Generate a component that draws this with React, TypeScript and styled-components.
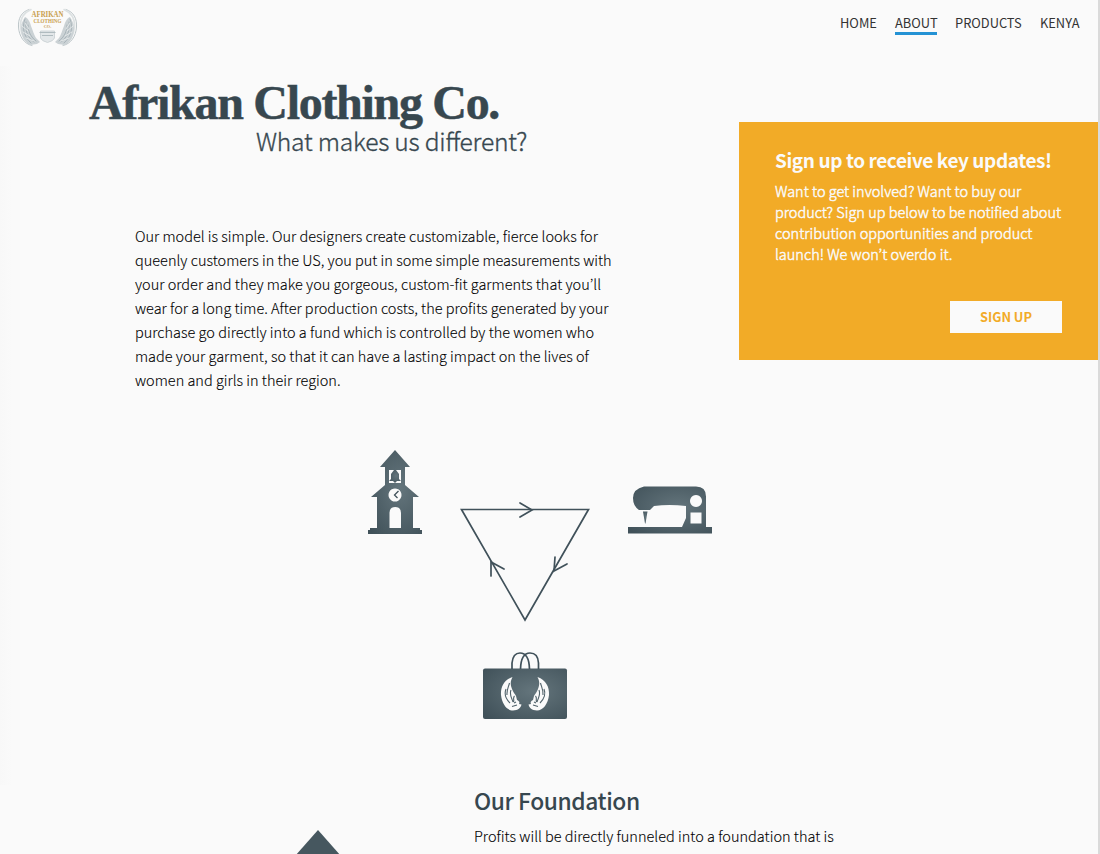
import React from 'react';
import styled, { createGlobalStyle } from 'styled-components';

const GlobalStyle = createGlobalStyle`
  * { box-sizing: border-box; }
  body {
    margin: 0;
    background: #fafafa;
    font-family: 'Noto Sans CJK JP', 'Noto Sans', sans-serif;
    font-feature-settings: 'liga' 1;
    color: #000;
  }
  h1, h2, h3, p { margin: 0; font-weight: 400; }
`;

const slate = '#37474f';
const gold = '#f2ab27';

const Page = styled.div`
  width: 1100px;
  height: 854px;
  overflow: hidden;
  border-right: 2px solid #dadada;
  background: linear-gradient(90deg, #f8f8f8, #fafafa 12px) 0 0 / 100% 785px no-repeat #fafafa;
`;

const Header = styled.header`
  display: flex;
  justify-content: space-between;
  align-items: flex-start;
  height: 66px;
  padding: 7px 18px 0 17px;
  background: #fafafa;
`;

const Nav = styled.nav`
  display: flex;
  gap: 18px;
  padding-top: 6px;
`;

const NavLink = styled.a<{ $active?: boolean; $width: number }>`
  width: ${(p) => p.$width}px;
  height: 22px;
  border-bottom: 3px solid ${(p) => (p.$active ? '#2492d4' : 'transparent')};
  font-size: 12.85px;
  line-height: 20px;
  color: #333;
  white-space: nowrap;
`;

const Intro = styled.section`
  display: flex;
  justify-content: space-between;
  height: 383px;
`;

const IntroText = styled.div`
  padding: 13px 0 0 89px;
`;

const Title = styled.h1`
  font: 700 48px/48px 'Liberation Serif', serif;
  letter-spacing: -1.3px;
  -webkit-text-stroke: 0.5px ${slate};
  color: ${slate};
  white-space: nowrap;
`;

const Subtitle = styled.h2`
  padding-left: 167px;
  font-size: 24.6px;
  font-weight: 300;
  line-height: 30px;
  letter-spacing: -0.22px;
  -webkit-text-stroke: 0.35px ${slate};
  margin-top: -2px;
  color: ${slate};
  white-space: nowrap;
`;

const Copy = styled.p<{ $size: number; $leading: number; $stroke?: number }>`
  font-size: ${(p) => p.$size}px;
  line-height: ${(p) => p.$leading}px;
  font-weight: 300;
  -webkit-text-stroke: ${(p) => p.$stroke ?? 0}px currentColor;
`;

const Line = styled.span`
  display: block;
  white-space: nowrap;
`;

const Model = styled.div`
  padding: 69px 0 0 46px;
`;

const Card = styled.aside`
  display: flex;
  flex-direction: column;
  width: 359px;
  height: 238px;
  margin-top: 56px;
  padding: 24px 36px 27px;
  background: ${gold};
  color: #fafafa;
`;

const CardTitle = styled.h3`
  margin-bottom: 6px;
  font-size: 19px;
  font-weight: 700;
  line-height: 28px;
  letter-spacing: -0.4px;
  white-space: nowrap;
`;

const SignUp = styled.button`
  align-self: flex-end;
  width: 112px;
  height: 32px;
  margin-top: auto;
  padding: 0;
  border: 0;
  background: #fafafa;
  color: ${gold};
  font: 700 12.8px/32px 'Noto Sans CJK JP', sans-serif;
`;

const Cycle = styled.section`
  padding-left: 366px;
  height: 335px;
`;

const Foundation = styled.section`
  display: flex;
`;

const FoundationArt = styled.div`
  width: 474px;
  padding: 46px 0 0 268px;
`;

const FoundationTitle = styled.h2`
  font-size: 22.8px;
  font-weight: 500;
  line-height: 34px;
  letter-spacing: -0.42px;
  margin: 0 0 6px;
  color: ${slate};
`;

function LogoWing() {
  return (
    <g fill="none" strokeLinecap="round">
      <path d="M12 2.500C4 5 1 12 1.500 20 2 29 7 37 15 38.500" stroke="#bdc6c9" strokeWidth="1" />
      <path d="M14 2.500C6 6 3 13 3.500 20 4 28 8 35 15 37" stroke="#dde2e3" strokeWidth="1.600" />
      <path d="M8 10c3 1 5 5 6 9 2 5 3 9 5 12l4 4-3 2-7 1C7 35 4 28 4 21c0-4 2-8 4-11Z" fill="#cbd2d5" />
      <path d="M8 12c-3 8-2 17 6 24M9 15c-1 8 1 15 8 20M11 18c0 7 3 12 8 16" stroke="#a4b0b5" strokeWidth=".9" />
      <path d="m5 19 6 5M6 25l7 4M9 31l8 3M8 16l4 6" stroke="#edf0f0" strokeWidth=".8" />
    </g>
  );
}

function Logo() {
  return (
    <svg width="61" height="40" viewBox="0 0 61 40">
      <LogoWing />
      <g transform="translate(61 0) scale(-1 1)"><LogoWing /></g>
      <path d="M23.500 24h14v7q-1 3-7 4.500-6-1.500-7-4.500Z" fill="#e3e7e9" stroke="#c6ced1" strokeWidth=".8" />
      <path d="M22.500 25.500h16M25 28.500h11" stroke="#b0bbbf" strokeWidth="1.200" />
      <g fill="#c9a04e" textAnchor="middle" fontFamily="Liberation Serif, serif" fontWeight="700">
        <text x="30.5" y="10.300" fontSize="8" textLength="32" lengthAdjust="spacingAndGlyphs">AFRIKAN</text>
        <text x="30.5" y="16.400" fontSize="5.800" textLength="28" lengthAdjust="spacingAndGlyphs">CLOTHING</text>
        <text x="30.5" y="21.200" fontSize="4.300">CO.</text>
      </g>
    </svg>
  );
}

function BagWing() {
  return (
    <g>
      <path d="M42.500 37C34 40 30.500 47 31 55c1 9 6 15.500 12 15.500 5 0 8-3 8.500-6l-2.500-.5c1-2 0-3-2-4l-1-4c-1-2-3-4-4-7-2-5-1.500-8 .5-12Z" fill="#fafafa" />
      <path d="M39.500 43c-1 4-3 7-2.500 12M36 49c-2 5 0 10 4 14M41 50c-2 5 1 8 2 12M44.500 56c-2 2 0 4-1 6M42 66.500l5-1.500M46 62l-2 1" fill="none" stroke="#51626a" strokeWidth="1.100" />
    </g>
  );
}

function CycleDiagram() {
  return (
    <svg width="350" height="280" viewBox="366 449 350 280">
      <defs>
        <radialGradient id="metal" cx=".6" cy=".45" r=".75">
          <stop offset="0" stopColor="#64757c" />
          <stop offset="1" stopColor="#405159" />
        </radialGradient>
      </defs>
      <g fill="url(#metal)">
        <path fillRule="evenodd" d="M395 450l15 17h-5v18l14 12h-6v31h7v2h2v4h-54v-4h2v-2h7v-31h-6l14-12v-18h-5ZM389 470v13h12v-13ZM395 488.500a6.500 6.500 0 1 0 .01 0ZM389.500 528h11.500v-15q0-6-5.800-6t-5.700 6Z" />
        <path d="M394 470h2l3 4v5l2 2h-4l-2 2-2-2h-4l2-2v-5Z" />
        <path fillRule="evenodd" d="M644 486.500h52q10 0 10 10v30.500h6v6.500h-84v-6.500h54l4-9v-12q-17-2-32 0l-4 4h-11q-6-4-6-12 0-9 11-11.500ZM696 495a6 6 0 1 0 .01 0ZM690.500 512.500v11h11v-11Z" />
        <path d="M643 511.500h4.500l-2 12h-.5Z" />
        <rect x="483" y="668.500" width="84" height="50.500" rx="2" />
      </g>
      <g fill="none" stroke="#40515a" strokeWidth="1.700">
        <path d="m398.500 491-4 4 3 3" strokeWidth="1.300" />
        <path d="M461.500 509.500h127L525 620Z" />
        <path d="m520 503 12 7-12 7M555 557l-1 14 13-7M491 576l0-14 13 7" strokeLinecap="round" />
        <path d="M512 669v-6q1-10 8-10 9 0 9.500 16M520.500 669q.5-16 9.500-16 8 0 8.500 10v6" />
      </g>
      <g transform="translate(470 640)"><BagWing /></g>
      <g transform="translate(580 640) scale(-1 1)"><BagWing /></g>
    </svg>
  );
}

export default function App() {
  return (
    <Page>
      <GlobalStyle />
      <Header>
        <Logo />
        <Nav>
          <NavLink $width={37}>HOME</NavLink>
          <NavLink $width={42} $active>ABOUT</NavLink>
          <NavLink $width={67}>PRODUCTS</NavLink>
          <NavLink $width={40}>KENYA</NavLink>
        </Nav>
      </Header>
      <Intro>
        <IntroText>
          <Title>Afrikan Clothing Co.</Title>
          <Subtitle>What makes us different?</Subtitle>
          <Model>
            <Copy $size={14.5} $leading={24} $stroke={0.1}>
              <Line>Our model is simple. Our designers create customizable, fierce looks for</Line>
              <Line>queenly customers in the US, you put in some simple measurements with</Line>
              <Line>your order and they make you gorgeous, custom-fit garments that you’ll</Line>
              <Line>wear for a long time. After production costs, the profits generated by your</Line>
              <Line>purchase go directly into a fund which is controlled by the women who</Line>
              <Line>made your garment, so that it can have a lasting impact on the lives of</Line>
              <Line>women and girls in their region.</Line>
            </Copy>
          </Model>
        </IntroText>
        <Card>
          <CardTitle>Sign up to receive key updates!</CardTitle>
          <Copy $size={14.5} $leading={21} $stroke={0.45}>
            <Line>Want to get involved? Want to buy our</Line>
            <Line>product? Sign up below to be notified about</Line>
            <Line>contribution opportunities and product</Line>
            <Line>launch! We won’t overdo it.</Line>
          </Copy>
          <SignUp>SIGN UP</SignUp>
        </Card>
      </Intro>
      <Cycle>
        <CycleDiagram />
      </Cycle>
      <Foundation>
        <FoundationArt>
          <svg width="100" height="60" viewBox="0 0 100 60">
            <path d="M50 0 103 60H-3Z" fill="#46575f" />
          </svg>
        </FoundationArt>
        <div>
          <FoundationTitle>Our Foundation</FoundationTitle>
          <Copy $size={14.5} $leading={24} $stroke={0.1}>
            <Line>Profits will be directly funneled into a foundation that is</Line>
          </Copy>
        </div>
      </Foundation>
    </Page>
  );
}
